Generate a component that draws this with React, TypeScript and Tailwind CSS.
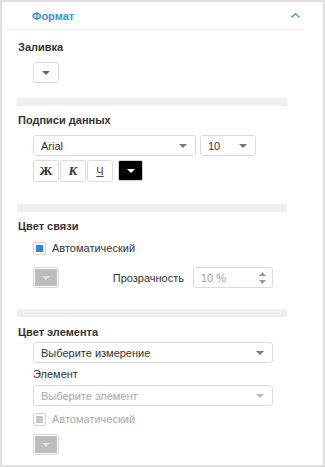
import React from 'react';

const Caret: React.FC<{ color?: string }> = ({ color = '#666' }) => (
    <svg width="8" height="4" viewBox="0 0 8 4" className="shrink-0">
        <polygon points="0,0 8,0 4,4" fill={color}/>
    </svg>
);

const Select: React.FC<{ text: string; width: string; disabled?: boolean }> = ({ text, width, disabled }) => (
    <div className={`${width} h-[21px] flex items-center justify-between pl-[7px] pr-[8px] border border-[#dcdcdc] rounded-[3px] bg-white`}>
        <span className={disabled ? 'text-[#a8a8a8]' : 'text-[#333]'}>{text}</span>
        <Caret color={disabled ? '#bbb' : '#777'}/>
    </div>
);

const Checkbox: React.FC<{ label: string; disabled?: boolean }> = ({ label, disabled }) => (
    <div className="flex items-center h-[14px] pl-[16px]">
        <div className="w-[13px] h-[13px] border border-[#d2d2d2] rounded-[2px] p-[2px] bg-white">
            <div className={`w-full h-full ${disabled ? 'bg-[#c9c9c9]' : 'bg-[#2b8bd2]'}`}></div>
        </div>
        <span className={`ml-[6px] ${disabled ? 'text-[#aaa]' : 'text-[#333]'}`}>{label}</span>
    </div>
);

const GrayColorButton: React.FC = () => (
    <div className="w-[26px] h-[21px] border border-[#d6d6d6] rounded-[3px] p-[1px] bg-white">
        <div className="w-full h-full bg-[#bcbcbc] flex items-center justify-center">
            <Caret color="#dedede"/>
        </div>
    </div>
);

const Divider: React.FC = () => <div className="w-[270px] h-[8px] bg-[#efefef]"></div>;

const Heading: React.FC<{ children: React.ReactNode }> = ({ children }) => (
    <div className="pl-px font-bold text-[#333] leading-[14px]">{children}</div>
);

const App: React.FC = () => {
    return (
        <div className="w-[325px] h-[467px] border-2 border-[#e0e0e0] bg-white font-['Liberation_Sans',Arial,sans-serif] text-[11px] leading-[14px] overflow-hidden">
            {/* Panel header */}
            <div className="h-[27px] flex items-center justify-between pl-[30px] pr-[23px]">
                <span className="font-bold text-[#3a8fd4]">Формат</span>
                <svg width="9" height="5" viewBox="0 0 9 5">
                    <polyline points="0.5,4.5 4.5,0.8 8.5,4.5" fill="none" stroke="#3a8fd4" strokeWidth="1.2"/>
                </svg>
            </div>
            <div className="ml-[4px] w-[298px] h-px bg-[#ececec]"></div>

            <div className="pl-[15px] flex flex-col">
                {/* Fill */}
                <div className="mt-[10px]"><Heading>Заливка</Heading></div>
                <div className="mt-[8px] pl-[16px]">
                    <div className="w-[26px] h-[21px] border border-[#d8d8d8] rounded-[3px] flex items-center justify-center">
                        <Caret/>
                    </div>
                </div>
                <div className="mt-[15px]"><Divider/></div>

                {/* Data labels */}
                <div className="mt-[7px]"><Heading>Подписи данных</Heading></div>
                <div className="mt-[8px] pl-[16px] flex gap-[4px]">
                    <Select text="Arial" width="w-[163px]"/>
                    <Select text="10" width="w-[56px]"/>
                </div>
                <div className="mt-[4px] pl-[16px] flex items-start">
                    <div className="flex gap-px">
                        <div className="w-[26px] h-[22px] border border-[#dcdcdc] rounded-[3px] flex items-center justify-center font-['Liberation_Serif',serif] font-bold text-[13px] text-[#333]">Ж</div>
                        <div className="w-[26px] h-[22px] border border-[#dcdcdc] rounded-[3px] flex items-center justify-center font-['Liberation_Serif',serif] font-bold italic text-[13px] text-[#333]">К</div>
                        <div className="w-[26px] h-[22px] border border-[#dcdcdc] rounded-[3px] flex items-center justify-center text-[#444] underline">Ч</div>
                    </div>
                    <div className="ml-[5px] w-[25px] h-[21px] border border-[#d0d0d0] rounded-[2px] bg-black flex items-center justify-center">
                        <Caret color="#fff"/>
                    </div>
                </div>
                <div className="mt-[22px]"><Divider/></div>

                {/* Link color */}
                <div className="mt-[7px]"><Heading>Цвет связи</Heading></div>
                <div className="mt-[8px]"><Checkbox label="Автоматический"/></div>
                <div className="mt-[12px] pl-[16px] w-[256px] flex items-center">
                    <GrayColorButton/>
                    <span className="ml-auto text-[#333]">Прозрачность</span>
                    <div className="ml-[9px] w-[80px] h-[21px] border border-[#dcdcdc] rounded-[3px] flex items-center justify-between pl-[7px] pr-[6px]">
                        <span className="text-[#a0a0a0]">10 %</span>
                        <div className="flex flex-col gap-[4px]">
                            <svg width="7" height="4" viewBox="0 0 7 4"><polygon points="0,4 7,4 3.5,0" fill="#999"/></svg>
                            <svg width="7" height="4" viewBox="0 0 7 4"><polygon points="0,0 7,0 3.5,4" fill="#999"/></svg>
                        </div>
                    </div>
                </div>
                <div className="mt-[21px]"><Divider/></div>

                {/* Element color */}
                <div className="mt-[8px]"><Heading>Цвет элемента</Heading></div>
                <div className="mt-[3px] pl-[16px]">
                    <Select text="Выберите измерение" width="w-[240px]"/>
                </div>
                <div className="mt-[4px] pl-[16px] text-[#333]">Элемент</div>
                <div className="mt-[4px] pl-[16px]">
                    <Select text="Выберите элемент" width="w-[240px]" disabled/>
                </div>
                <div className="mt-[6px]"><Checkbox label="Автоматический" disabled/></div>
                <div className="mt-[8px] pl-[16px]">
                    <GrayColorButton/>
                </div>
            </div>
        </div>
    );
};

export default App;
